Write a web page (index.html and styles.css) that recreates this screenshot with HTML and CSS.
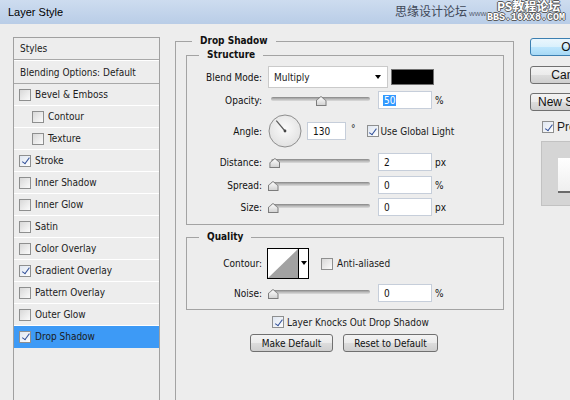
FILE: index.html
```html
<!DOCTYPE html>
<html lang="en">
<head>
<meta charset="utf-8">
<title>Layer Style</title>
<link rel="stylesheet" href="styles.css">
</head>
<body>
<div class="titlebar">
  <span class="title">Layer Style</span>
  <div class="watermark">
    <span class="wm-cn">思缘设计论坛</span>
    <span class="wm-www">www.</span>
    <span class="wm-ps">PS教程论坛</span>
    <span class="wm-bbs">BBS.16XX8.COM</span>
  </div>
</div>
<div class="main">
  <nav class="styles-list">
    <div class="item head">Styles</div>
    <div class="item blend">Blending Options: Default</div>
    <div class="item check"><span class="cb"></span>Bevel &amp; Emboss</div>
    <div class="item check sub"><span class="cb"></span>Contour</div>
    <div class="item check sub"><span class="cb"></span>Texture</div>
    <div class="item check"><span class="cb on"></span>Stroke</div>
    <div class="item check"><span class="cb"></span>Inner Shadow</div>
    <div class="item check"><span class="cb"></span>Inner Glow</div>
    <div class="item check"><span class="cb"></span>Satin</div>
    <div class="item check"><span class="cb"></span>Color Overlay</div>
    <div class="item check"><span class="cb on"></span>Gradient Overlay</div>
    <div class="item check"><span class="cb"></span>Pattern Overlay</div>
    <div class="item check"><span class="cb"></span>Outer Glow</div>
    <div class="item check active"><span class="cb on"></span>Drop Shadow</div>
  </nav>

  <fieldset class="group outer">
    <legend>Drop Shadow</legend>

    <fieldset class="group structure">
      <legend>Structure</legend>
      <div class="row r-blend">
        <span class="label">Blend Mode:</span>
        <div class="select"><span>Multiply</span><span class="arrow"></span></div>
        <span class="swatch"></span>
      </div>
      <div class="row r-opacity">
        <span class="label">Opacity:</span>
        <div class="slider"><div class="track"></div><span class="thumb" style="--v:0.5"></span></div>
        <div class="field"><span class="sel">50</span></div>
        <span class="unit">%</span>
      </div>
      <div class="row r-angle">
        <span class="label">Angle:</span>
        <svg class="dial" width="34" height="34" viewBox="0 0 34 34">
          <defs>
            <radialGradient id="dialfill" cx="50%" cy="42%" r="60%">
              <stop offset="0" stop-color="#fbfbfb"/>
              <stop offset="1" stop-color="#e0e0e0"/>
            </radialGradient>
          </defs>
          <circle cx="17" cy="17" r="16" fill="url(#dialfill)" stroke="#8e8e8e"/>
          <line x1="17" y1="17" x2="8.3" y2="6.7" stroke="#5a5a5a" stroke-width="1.2"/>
          <circle cx="17" cy="17" r="1.4" fill="#444"/>
        </svg>
        <div class="field f-angle">130</div>
        <span class="deg">°</span>
        <span class="cb on gl"></span>
        <span class="gl-text">Use Global Light</span>
      </div>
      <div class="row r-distance">
        <span class="label">Distance:</span>
        <div class="slider"><div class="track"></div><span class="thumb" style="--v:0.02"></span></div>
        <div class="field">2</div>
        <span class="unit">px</span>
      </div>
      <div class="row">
        <span class="label">Spread:</span>
        <div class="slider"><div class="track"></div><span class="thumb" style="--v:0"></span></div>
        <div class="field">0</div>
        <span class="unit">%</span>
      </div>
      <div class="row">
        <span class="label">Size:</span>
        <div class="slider"><div class="track"></div><span class="thumb" style="--v:0"></span></div>
        <div class="field">0</div>
        <span class="unit">px</span>
      </div>
    </fieldset>

    <fieldset class="group quality">
      <legend>Quality</legend>
      <div class="row r-contour">
        <span class="label">Contour:</span>
        <div class="contour">
          <svg class="curve" width="30" height="29" viewBox="0 0 30 29">
            <polygon points="0,29 30,0 30,29" fill="#a2a2a2"/>
          </svg>
          <span class="c-drop"><span class="arrow"></span></span>
        </div>
        <span class="cb aa"></span>
        <span class="aa-text">Anti-aliased</span>
      </div>
      <div class="row r-noise">
        <span class="label">Noise:</span>
        <div class="slider"><div class="track"></div><span class="thumb" style="--v:0"></span></div>
        <div class="field">0</div>
        <span class="unit">%</span>
      </div>
    </fieldset>

    <div class="knock"><span class="cb on"></span><span>Layer Knocks Out Drop Shadow</span></div>
    <div class="btnrow">
      <button class="btn b-make">Make Default</button>
      <button class="btn b-reset">Reset to Default</button>
    </div>
  </fieldset>

  <aside class="actions">
    <button class="btn wide primary">OK</button>
    <button class="btn wide b-cancel">Cancel</button>
    <button class="btn wide b-new">New Style...</button>
    <div class="preview-opt"><span class="cb on"></span><span>Preview</span></div>
    <div class="preview"><span class="prev-sq"></span></div>
  </aside>
</div>
</body>
</html>
```

FILE: styles.css
```css
* { box-sizing: border-box; }
html, body { margin: 0; padding: 0; }
body {
  width: 570px;
  height: 400px;
  overflow: hidden;
  background: #ededed;
  color: #1b1b1b;
  font-family: "DejaVu Sans Condensed", "DejaVu Sans", sans-serif;
  font-size: 10px;
}

/* title bar */
.titlebar {
  position: relative;
  height: 24px;
  display: flex;
  align-items: center;
  padding: 0 0 1px 8px;
  background: linear-gradient(#cddcef, #b9cde7);
}
.title { font: 11px "Liberation Sans", Arial, sans-serif; color: #000; }
.watermark { position: absolute; left: 390px; top: 0; width: 180px; height: 24px; overflow: hidden; }
.watermark span { position: absolute; white-space: nowrap; }
.wm-cn { left: 5px; top: 4px; font: 12px/14px "Noto Sans CJK SC", sans-serif; color: #3f4858; }
.wm-www { left: 79px; top: 9px; font: 8px/10px "Liberation Sans", sans-serif; color: #5c6576; }
.wm-ps {
  left: 107px; top: -1px;
  font: bold 12px/14px "Noto Sans CJK SC", sans-serif;
  color: #fff;
  text-shadow: 1px 0 #5a5a5a, -1px 0 #5a5a5a, 0 1px #5a5a5a, 0 -1px #5a5a5a;
}
.wm-bbs {
  left: 97px; top: 12px;
  font: bold 10px/12px "Liberation Mono", monospace;
  color: #fff;
  text-shadow: 1px 0 #5a5a5a, -1px 0 #5a5a5a, 0 1px #5a5a5a, 0 -1px #5a5a5a;
}

/* layout */
.main { display: flex; align-items: flex-start; padding: 13px 0 0 13px; }

/* styles list */
.styles-list { flex: none; width: 147px; height: 380px; border: 1px solid #a0a0a0; }
.item { display: flex; align-items: center; gap: 4px; height: 22px; padding-left: 5px; white-space: nowrap; }
.head { padding-left: 6px; border-bottom: 1px solid #a8a8a8; }
.blend { height: 24px; padding-left: 6px; border-top: 1px solid #fff; border-bottom: 1px solid #a8a8a8; }
.check { border-bottom: 1px solid #fff; }
.sub { padding-left: 18px; }
.active { background: #3d9af6; border-bottom-color: #3d9af6; }

/* checkbox */
.cb {
  position: relative;
  flex: none;
  width: 12px;
  height: 12px;
  border: 1px solid #8e8f8f;
  background: linear-gradient(135deg, #d8d8d8, #fbfbfb);
}
.cb.on { background: linear-gradient(135deg, #dfe6f1, #fdfdfd); }
.cb.on::after {
  content: "";
  position: absolute;
  left: 3.5px;
  top: 0.5px;
  width: 3px;
  height: 6.5px;
  border: solid #31509a;
  border-width: 0 1.6px 1.6px 0;
  transform: rotate(36deg);
}

/* group boxes */
.group { margin: 0; padding: 0; border: 1px solid #a3a3a3; min-width: 0; }
.group > legend { padding: 0 8px; font-weight: bold; line-height: 14px; color: #111; }
.outer { flex: none; width: 339px; height: 380px; margin: -3px 0 0 15px; padding: 0 9px 0 10px; }
.outer > legend { margin-left: 6px; }
.structure { padding: 4px 0 6px; }
.structure > legend, .quality > legend { margin-left: 12px; }
.quality { margin-top: 5px; padding: 4px 0 5px; }

/* rows */
.row { display: flex; align-items: center; height: 22px; white-space: nowrap; }
.r-opacity, .r-distance { height: 24px; }
.r-angle { height: 38px; }
.r-contour { height: 31px; }
.r-noise { margin-top: 3px; }
.label { flex: none; width: 75px; margin-right: 6px; text-align: right; color: #111; }

.select {
  flex: none;
  display: flex;
  align-items: center;
  justify-content: space-between;
  width: 120px;
  height: 22px;
  padding: 0 6px 0 5px;
  background: #fff;
  border: 1px solid #cacaca;
}
.arrow {
  width: 0; height: 0;
  border-left: 3.5px solid transparent;
  border-right: 3.5px solid transparent;
  border-top: 4px solid #000;
}
.swatch { flex: none; width: 43px; height: 16px; margin-left: 3px; background: #000; border: 1px solid #707070; }

.slider { position: relative; flex: none; width: 104px; height: 22px; }
.track {
  height: 4px;
  margin: 8px 2px 0 3px;
  border-radius: 2px;
  background: linear-gradient(#858585, #b8b8b8 50%, #dcdcdc);
}
.thumb { position: absolute; top: 7px; left: calc(var(--v) * 96px - 0.5px); width: 11px; height: 10px; }
.thumb::before, .thumb::after {
  content: "";
  position: absolute;
  clip-path: polygon(50% 0, 100% 48%, 100% 100%, 0 100%, 0 48%);
}
.thumb::before { inset: 0; background: #7c7c7c; }
.thumb::after { inset: 1px; background: linear-gradient(#fdfdfd, #d3d3d3); }

.field {
  flex: none;
  display: flex;
  align-items: center;
  width: 54px;
  height: 18px;
  margin-left: 6px;
  padding-left: 5px;
  background: #fff;
  border: 1px solid #c6ceda;
  color: #111;
}
.sel { background: #3399ff; color: #fff; padding: 0 1px; margin-left: -1px; }
.unit { margin-left: 3px; color: #111; }

.dial { flex: none; margin-right: 5px; }
.f-angle { width: 39px; margin-left: 0; }
.deg { margin-left: 5px; align-self: center; position: relative; top: -3px; }
.gl { margin-left: 11px; }
.gl-text { margin-left: 2px; }

.contour {
  flex: none;
  display: flex;
  width: 42px;
  height: 31px;
  margin-left: -1px;
  background: #fff;
  border: 1px solid #000;
}
.curve { display: block; flex: none; }
.c-drop {
  flex: 1;
  display: flex;
  justify-content: center;
  padding-top: 12px;
  border-left: 1px solid #000;
}
.aa { margin-left: 12px; }
.aa-text { margin-left: 4px; }

.knock { display: flex; align-items: center; gap: 3px; height: 16px; margin-top: 4px; padding-left: 86px; white-space: nowrap; }
.btnrow { display: flex; gap: 10px; margin-top: 4px; padding-left: 64px; }

/* buttons */
.btn {
  flex: none;
  height: 18px;
  padding: 0;
  border: 1px solid #707070;
  border-radius: 3px;
  background: linear-gradient(#f3f3f3, #ebebeb 50%, #dddddd 50%, #cfcfcf);
  font: 10px "DejaVu Sans Condensed", "DejaVu Sans", sans-serif;
  color: #111;
  text-align: center;
  white-space: nowrap;
}
.b-make { width: 83px; }
.b-reset { width: 95px; }

.actions { flex: none; display: flex; flex-direction: column; align-items: flex-start; width: 90px; margin: 1px 0 0 16px; }
.btn.wide { width: 80px; font: 12px "Liberation Sans", Arial, sans-serif; }
.primary { border-color: #3c7fb1; background: linear-gradient(#eaf6fd, #d9f0fc 50%, #bee6fd 50%, #a7d9f5); }
.b-cancel { margin-top: 10px; }
.b-new { margin-top: 9px; }
.preview-opt { display: flex; align-items: center; gap: 3px; height: 12px; margin: 10px 0 0 12px; font: 12px "Liberation Sans", Arial, sans-serif; white-space: nowrap; }
.preview { width: 70px; height: 65px; margin: 8px 0 0 11px; padding: 16px 0 0 16px; background: #d5d5d5; border: 1px solid #c2c2c2; }
.prev-sq { display: block; width: 40px; height: 35px; background: linear-gradient(#fff, #efefef); border-bottom: 2px solid #6a6a6a; }
```
